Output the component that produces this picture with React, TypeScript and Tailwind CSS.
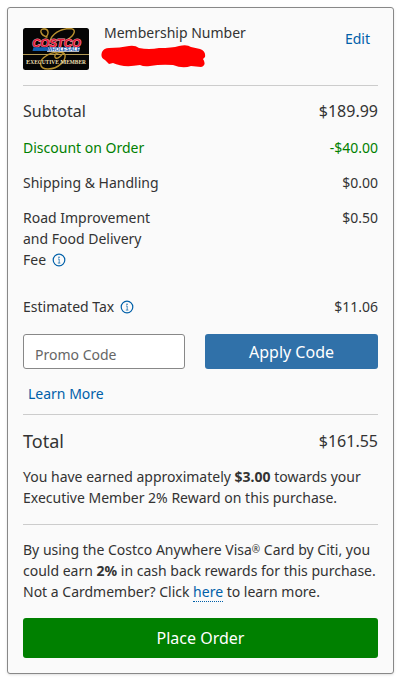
import React, { useState } from 'react';

const InfoIcon = () => (
  <svg viewBox="0 0 14 14" className="w-3.5 h-3.5" fill="none" aria-hidden="true">
    <circle cx="7" cy="7" r="5.8" stroke="#0060a9" strokeWidth="1.2" />
    <circle cx="7" cy="4.2" r="0.75" fill="#0060a9" />
    <path d="M6 6h1.2v4M5.8 10.1h2.6" stroke="#0060a9" strokeWidth="0.7" />
  </svg>
);

const InfoButton: React.FC<{ label: string }> = ({ label }) => (
  <button type="button" aria-label={label} className="ml-1.5 -mt-0.5 inline-flex align-middle cursor-pointer">
    <InfoIcon />
  </button>
);

const MemberCard = () => (
  <svg viewBox="0 0 66 42" className="w-[66px] h-[42px] shrink-0" role="img" aria-label="Costco Executive Member">
    <rect width="66" height="42" rx="2.5" fill="#050505" />
    <path d="M0 26.5h66" stroke="#b39a55" strokeWidth="1" />
    {/* gold monogram */}
    <path
      d="M24 9C17 7 16 1 21 0.8C26 1 26 6 23 9M27 13C29 6 37 0.5 47 0.5C54 1 52 7 44 12M40 25C38 29 33 32 32 29C31 25 40 22 42 27C43 32 36 41 25 41C16 41 15 33 23 28C27 25 31 24 34 25"
      fill="none"
      stroke="#b8902f"
      strokeWidth="1.4"
      strokeLinecap="round"
    />
    <text
      x="33.5"
      y="18.5"
      textAnchor="middle"
      fontFamily="Liberation Sans, sans-serif"
      fontSize="11.4"
      fontWeight="900"
      fontStyle="italic"
      fill="#e31a38"
      stroke="#f3a3b3"
      strokeWidth="1"
      paintOrder="stroke"
    >
      COSTCO
    </text>
    <path d="M24.5 19.2H57l-1 4.6H24z" fill="#f1f4fa" />
    <path d="M10.5 19.2h15l-1.2 3.8H9.5z" fill="#1260b2" />
    <text x="40.3" y="23.3" textAnchor="middle" fontFamily="Liberation Sans, sans-serif" fontSize="5.2" fontWeight="700" fontStyle="italic" fill="#0b50ae">
      WHOLESALE
    </text>
    <text x="33" y="36" textAnchor="middle" fontFamily="Liberation Serif, serif" fontSize="5.4" fontWeight="700" fill="#ecdfb0">
      <tspan fontSize="6.4">E</tspan>XECUTIVE <tspan fontSize="6.4">M</tspan>EMBER
    </text>
  </svg>
);

interface RowProps {
  amount: string;
  className?: string;
  amountClass?: string;
  children: React.ReactNode;
}

const Row: React.FC<RowProps> = ({ amount, className = '', amountClass = '', children }) => (
  <div className={`flex justify-between ${className}`}>
    <dt className="whitespace-nowrap">{children}</dt>
    <dd className={amountClass}>{amount}</dd>
  </div>
);

export default function App() {
  const [promoCode, setPromoCode] = useState('');

  return (
    <main className="p-[7px] pb-[5px] font-['Noto_Sans',sans-serif] text-sm leading-[21px] text-[#333]">
      <section className="bg-[#fafafa] border border-[#888] rounded-[3px] px-[15px] pt-3.5 pb-[15px] shadow-sm">
        {/* Membership */}
        <div className="flex items-start h-16 border-b border-[#ccc]">
          <div className="pt-1.5">
            <MemberCard />
          </div>
          <div className="ml-[15px] flex-1">
            <p>Membership Number</p>
            <svg viewBox="0 0 106 24" className="-ml-1 mt-px w-[106px] h-6" aria-hidden="true">
              <path
                d="M9 4Q20 4 29 2Q35 1 39 4Q49 6 59 4Q72 4 79 2Q87 0 91 3L100 5Q106 7 105 13L103 15Q107 21 101 23L91 22Q83 25 73 21Q61 20 50 22Q44 23 40 21Q23 24 13 19L9 20L5 16Q0 14 2 8Q4 4 9 4Z"
                fill="#f00"
              />
            </svg>
          </div>
          <a href="#edit" className="mt-1.5 mr-2 text-[#0060a9]">Edit</a>
        </div>

        {/* Charges */}
        <dl className="mt-[13px] flex flex-col gap-3.5">
          <Row amount="$189.99" className="text-base">Subtotal</Row>
          <Row amount="-$40.00" className="text-[#008000]">Discount on Order</Row>
          <Row amount="$0.00">Shipping &amp; Handling</Row>
          <Row amount="$0.50">
            Road Improvement
            <br />
            and Food Delivery
            <br />
            Fee
            <InfoButton label="About the delivery fee" />
          </Row>
          <Row amount="$11.06" className="mt-3">
            Estimated Tax
            <InfoButton label="About estimated tax" />
          </Row>
        </dl>

        {/* Promo code */}
        <form className="mt-[17px] grid grid-cols-[162fr_173fr] gap-5" onSubmit={e => e.preventDefault()}>
          <input
            type="text"
            aria-label="Promo Code"
            placeholder="Promo Code"
            value={promoCode}
            onChange={e => setPromoCode(e.target.value)}
            className="min-w-0 h-[35px] pt-1.5 px-[11px] bg-white border border-[#888] rounded-[3px] placeholder:text-[#666]"
          />
          <button type="submit" className="h-[35px] rounded-[3px] bg-[#3071a9] text-white text-base cursor-pointer">
            Apply Code
          </button>
        </form>
        <div className="mt-3.5 pl-[5px] pb-2.5 border-b border-[#ccc]">
          <a href="#promo" className="text-[#0060a9]">Learn More</a>
        </div>

        {/* Total */}
        <dl className="mt-3.5">
          <Row amount="$161.55" className="text-lg leading-6" amountClass="text-base leading-6">Total</Row>
        </dl>
        <p className="mt-[13px] pb-4 border-b border-[#ccc]">
          You have earned approximately <strong>$3.00</strong> towards your Executive Member 2% Reward on this purchase.
        </p>
        <p className="mt-3.5">
          By using the Costco Anywhere Visa<span className="text-[10px] leading-none align-[2px]">®</span> Card by Citi, you
          could earn <strong>2%</strong> in cash back rewards for this purchase. Not a Cardmember? Click{' '}
          <a href="#card" className="text-[#0060a9] border-b border-dotted border-[#0060a9]">here</a> to learn more.
        </p>
        <button type="button" className="mt-4 w-full h-10 rounded-[3px] bg-[#008000] text-white text-base cursor-pointer">
          Place Order
        </button>
      </section>
    </main>
  );
}
